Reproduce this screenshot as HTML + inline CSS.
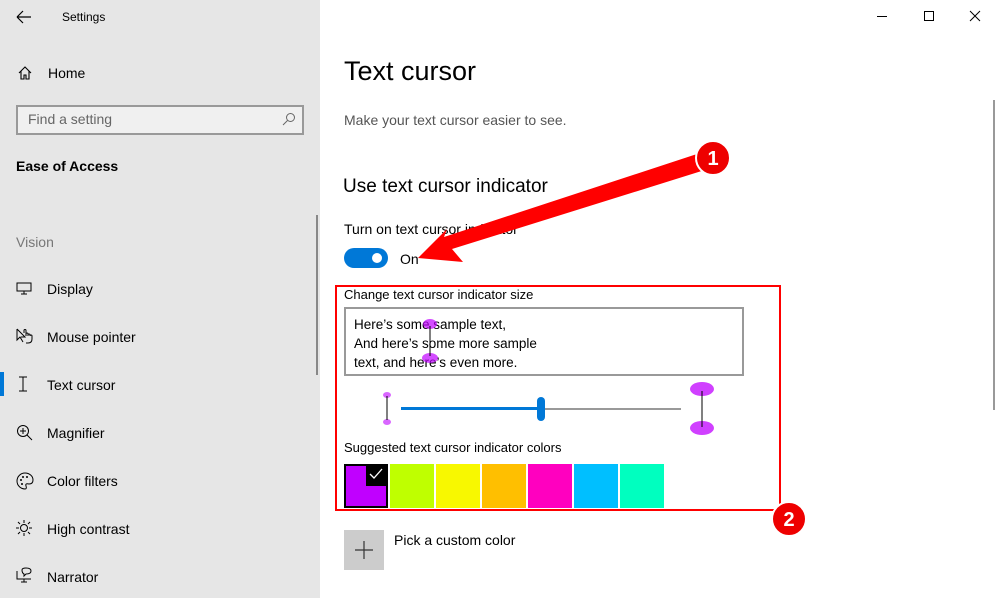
<!DOCTYPE html><html><head><style>
*{margin:0;padding:0;box-sizing:border-box}
body{width:998px;height:598px;overflow:hidden;background:#fff;font-family:"Liberation Sans",sans-serif;color:#000;position:relative}
.side{position:absolute;left:0;top:0;width:320px;height:598px;background:#e6e6e6}
.a{position:absolute;white-space:nowrap}
.nav{font-size:14px;left:47px}
.ic{position:absolute;left:16px}
.sw{position:absolute;top:464px;width:44px;height:44px}
</style></head><body>
<div class="side">
<svg class="a" style="left:16px;top:10px" width="16" height="14"><path d="M1 7H15M1 7L7 1M1 7L7 13" stroke="#000" fill="none" stroke-width="1.2"/></svg>
<div class="a" style="left:62px;top:10px;font-size:12px">Settings</div>
<svg class="a" style="left:17px;top:65px" width="16" height="16"><path d="M2 8L8 2L14 8M4 6V14H7V10H9V14H12V6" stroke="#000" fill="none" stroke-width="1.1"/></svg>
<div class="a nav" style="top:65px;left:48px">Home</div>
<div class="a" style="left:16px;top:105px;width:288px;height:30px;border:2px solid #999;background:#f0f0f0"></div>
<div class="a" style="left:28px;top:111px;font-size:14px;color:#666">Find a setting</div>
<svg class="a" style="left:282px;top:112px" width="14" height="14"><circle cx="8.5" cy="5.5" r="4" stroke="#666" fill="none"/><path d="M5.5 8.5L1 13" stroke="#666"/></svg>
<div class="a" style="left:16px;top:158px;font-size:14px;font-weight:bold">Ease of Access</div>
<div class="a" style="left:16px;top:234px;font-size:14px;color:#777">Vision</div>
<div class="a" style="left:316px;top:215px;width:2px;height:160px;background:#888"></div>
<svg class="ic" style="top:282px" width="18" height="14"><rect x="1" y="1" width="14" height="8" stroke="#000" fill="none"/><path d="M8 9V12M5 12H11" stroke="#000"/></svg>
<div class="a nav" style="top:281px">Display</div>
<svg class="ic" style="top:328px" width="18" height="16"><path d="M1 1L1 12L4 9L7 14M1 1L9 9L5 9M8 5V2.5A1 1 0 0 1 10 2.5V8M10 6A1 1 0 0 1 12 6V8M12 7A1 1 0 0 1 14 7V8A1 1 0 0 1 16 8V11Q16 15 12 15H10" stroke="#000" fill="none"/></svg>
<div class="a nav" style="top:329px">Mouse pointer</div>
<div class="a" style="left:0;top:372px;width:4px;height:24px;background:#0078d7"></div>
<svg class="ic" style="top:376px;left:18px" width="10" height="16"><path d="M1 1H9M5 1V15M1 15H9" stroke="#000"/></svg>
<div class="a nav" style="top:377px">Text cursor</div>
<svg class="ic" style="top:424px" width="18" height="18"><circle cx="7" cy="7" r="5.5" stroke="#000" fill="none"/><path d="M11 11L16 16M7 4V10M4 7H10" stroke="#000"/></svg>
<div class="a nav" style="top:425px">Magnifier</div>
<svg class="ic" style="top:472px" width="18" height="18"><path d="M9 1A8 8 0 0 0 9 17Q11 17 10 14Q9 11 13 12Q17 12 17 8A8 7 0 0 0 9 1Z" stroke="#000" fill="none"/><circle cx="5" cy="8" r="1"/><circle cx="7" cy="5" r="1"/><circle cx="11" cy="5" r="1"/><circle cx="6" cy="12" r="1"/></svg>
<div class="a nav" style="top:473px">Color filters</div>
<svg class="ic" style="top:520px" width="18" height="18"><circle cx="8" cy="8" r="3.5" stroke="#000" fill="none"/><path d="M8 0V3M8 13V16M0 8H3M13 8H16M2 2L4 4M12 12L14 14M2 14L4 12M12 4L14 2" stroke="#000"/></svg>
<div class="a nav" style="top:521px">High contrast</div>
<svg class="ic" style="top:567px" width="18" height="18"><path d="M1 4V12H15M8 12V15M5 15H11M6 3Q6 1 10 1Q15 1 15 4Q15 7 10 7L8 9V7Q6 6 6 3Z" stroke="#000" fill="none"/></svg>
<div class="a nav" style="top:569px">Narrator</div>
</div>
<div class="a" style="left:877px;top:16px;width:10px;height:1px;background:#000"></div>
<div class="a" style="left:924px;top:11px;width:10px;height:10px;border:1px solid #000"></div>
<svg class="a" style="left:969px;top:10px" width="12" height="12"><path d="M1 1L11 11M11 1L1 11" stroke="#000"/></svg>
<div class="a" style="left:993px;top:100px;width:2px;height:310px;background:#999"></div>
<div class="a" style="left:344px;top:56px;font-size:27px">Text cursor</div>
<div class="a" style="left:344px;top:112px;font-size:14px;color:#555">Make your text cursor easier to see.</div>
<div class="a" style="left:343px;top:176px;font-size:19px">Use text cursor indicator</div>
<div class="a" style="left:344px;top:221px;font-size:14px">Turn on text cursor indicator</div>
<div class="a" style="left:344px;top:248px;width:44px;height:20px;border-radius:10px;background:#0078d7"></div>
<div class="a" style="left:372px;top:253px;width:10px;height:10px;border-radius:5px;background:#fff"></div>
<div class="a" style="left:400px;top:251px;font-size:14px">On</div>
<div class="a" style="left:335px;top:285px;width:446px;height:226px;border:2px solid #f00"></div>
<div class="a" style="left:344px;top:287px;font-size:13px">Change text cursor indicator size</div>
<div class="a" style="left:344px;top:307px;width:400px;height:69px;border:2px solid #999"></div>
<div class="a" style="left:354px;top:315px;font-size:13.5px;line-height:19px">Here’s some sample text,<br>And here’s some more sample<br>text, and here’s even more.</div>
<svg class="a" style="left:420px;top:318px" width="22" height="46"><ellipse cx="10" cy="6" rx="7" ry="5" fill="#c000ff" opacity=".7"/><ellipse cx="10" cy="40" rx="8" ry="5" fill="#c000ff" opacity=".7"/><path d="M10 8V38" stroke="#000"/></svg>
<svg class="a" style="left:380px;top:390px" width="14" height="36"><ellipse cx="7" cy="5" rx="4" ry="3" fill="#c000ff" opacity=".6"/><ellipse cx="7" cy="32" rx="4" ry="3" fill="#c000ff" opacity=".6"/><path d="M7 6V30" stroke="#000"/></svg>
<div class="a" style="left:401px;top:407px;width:140px;height:3px;background:#0078d7"></div>
<div class="a" style="left:541px;top:408px;width:140px;height:2px;background:#999"></div>
<div class="a" style="left:537px;top:397px;width:8px;height:24px;border-radius:4px;background:#0078d7"></div>
<svg class="a" style="left:686px;top:381px" width="32" height="56"><ellipse cx="16" cy="8" rx="12" ry="7" fill="#c000ff" opacity=".75"/><ellipse cx="16" cy="47" rx="12" ry="7" fill="#c000ff" opacity=".75"/><path d="M16 10V46" stroke="#000"/></svg>
<div class="a" style="left:344px;top:440px;font-size:13px">Suggested text cursor indicator colors</div>
<div class="sw" style="left:344px;background:#c000ff;border:2px solid #000"></div>
<div class="a" style="left:366px;top:464px;width:22px;height:22px;background:#000"></div>
<svg class="a" style="left:369px;top:468px" width="14" height="12"><path d="M1 6L5 10L13 1" stroke="#fff" fill="none" stroke-width="1.3"/></svg>
<div class="sw" style="left:390px;background:#bfff00"></div>
<div class="sw" style="left:436px;background:#f8f800"></div>
<div class="sw" style="left:482px;background:#ffbf00"></div>
<div class="sw" style="left:528px;background:#ff00bf"></div>
<div class="sw" style="left:574px;background:#00bfff"></div>
<div class="sw" style="left:620px;background:#00ffbf"></div>
<div class="a" style="left:344px;top:530px;width:40px;height:40px;background:#ccc"></div>
<svg class="a" style="left:354px;top:540px" width="20" height="20"><path d="M10 1V19M1 10H19" stroke="#333" stroke-width="1.2"/></svg>
<div class="a" style="left:394px;top:532px;font-size:14px">Pick a custom color</div>
<svg class="a" style="left:0;top:0" width="998" height="598"><path d="M700 153L708 169L452 249L463 262L418 258L447 229L444 237Z" fill="#f00"/><circle cx="713" cy="158" r="17" fill="#e00" stroke="#fff" stroke-width="2"/><text x="713" y="165" font-size="20" font-weight="bold" fill="#fff" text-anchor="middle" font-family="Liberation Sans">1</text><circle cx="789" cy="519" r="17" fill="#e00" stroke="#fff" stroke-width="2"/><text x="789" y="526" font-size="20" font-weight="bold" fill="#fff" text-anchor="middle" font-family="Liberation Sans">2</text></svg>
</body></html>
